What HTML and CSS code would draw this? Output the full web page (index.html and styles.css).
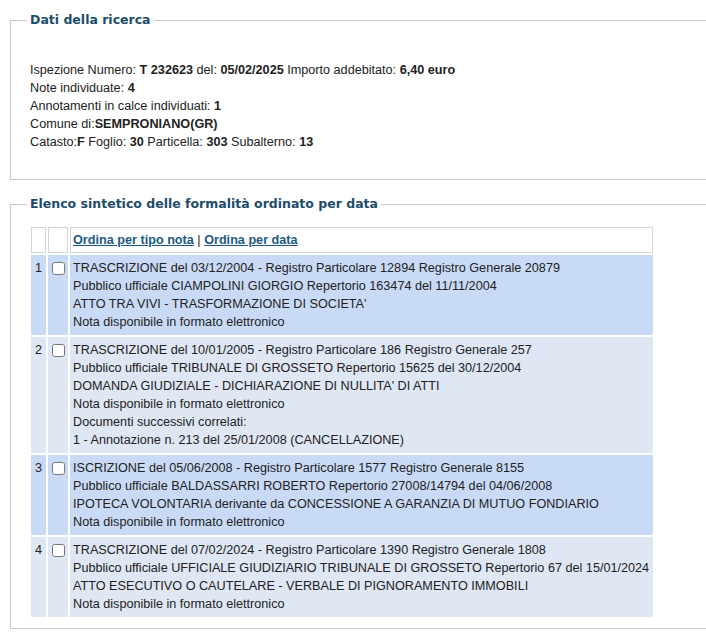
FILE: index.html
```html
<!DOCTYPE html>
<html lang="it">
<head>
    <meta charset="UTF-8">
    <meta name="viewport" content="width=device-width, initial-scale=1.0">
    <title>Ispezione ipotecaria</title>
    <link rel="stylesheet" href="styles.css">
</head>
<body>
    <div class="page">
        <!-- riepilogo della ricerca -->
        <fieldset class="box box-ricerca">
            <legend>Dati della ricerca</legend>
            <p>Ispezione Numero: <b>T 232623</b> del: <b>05/02/2025</b> Importo addebitato: <b>6,40 euro</b></p>
            <p>Note individuate: <b>4</b></p>
            <p>Annotamenti in calce individuati: <b>1</b></p>
            <p>Comune di:<b>SEMPRONIANO(GR)</b></p>
            <p>Catasto:<b>F</b> Foglio: <b>30</b> Particella: <b>303</b> Subalterno: <b>13</b></p>
        </fieldset>

        <!-- elenco formalita -->
        <fieldset class="box box-elenco">
            <legend>Elenco sintetico delle formalità ordinato per data</legend>
            <table class="elenco">
                <tr class="intestazione">
                    <td></td>
                    <td></td>
                    <td><a href="#">Ordina per tipo nota</a> | <a href="#">Ordina per data</a></td>
                </tr>
                <tr class="riga-a">
                    <td>1</td>
                    <td><input type="checkbox" name="nota1"></td>
                    <td>TRASCRIZIONE del 03/12/2004 - Registro Particolare 12894 Registro Generale 20879<br>
                        Pubblico ufficiale CIAMPOLINI GIORGIO Repertorio 163474 del 11/11/2004<br>
                        ATTO TRA VIVI - TRASFORMAZIONE DI SOCIETA'<br>
                        Nota disponibile in formato elettronico</td>
                </tr>
                <tr class="riga-b">
                    <td>2</td>
                    <td><input type="checkbox" name="nota2"></td>
                    <td>TRASCRIZIONE del 10/01/2005 - Registro Particolare 186 Registro Generale 257<br>
                        Pubblico ufficiale TRIBUNALE DI GROSSETO Repertorio 15625 del 30/12/2004<br>
                        DOMANDA GIUDIZIALE - DICHIARAZIONE DI NULLITA' DI ATTI<br>
                        Nota disponibile in formato elettronico<br>
                        Documenti successivi correlati:<br>
                        1 - Annotazione n. 213 del 25/01/2008 (CANCELLAZIONE)</td>
                </tr>
                <tr class="riga-a">
                    <td>3</td>
                    <td><input type="checkbox" name="nota3"></td>
                    <td>ISCRIZIONE del 05/06/2008 - Registro Particolare 1577 Registro Generale 8155<br>
                        Pubblico ufficiale BALDASSARRI ROBERTO Repertorio 27008/14794 del 04/06/2008<br>
                        IPOTECA VOLONTARIA derivante da CONCESSIONE A GARANZIA DI MUTUO FONDIARIO<br>
                        Nota disponibile in formato elettronico</td>
                </tr>
                <tr class="riga-b">
                    <td>4</td>
                    <td><input type="checkbox" name="nota4"></td>
                    <td>TRASCRIZIONE del 07/02/2024 - Registro Particolare 1390 Registro Generale 1808<br>
                        Pubblico ufficiale UFFICIALE GIUDIZIARIO TRIBUNALE DI GROSSETO Repertorio 67 del 15/01/2024<br>
                        ATTO ESECUTIVO O CAUTELARE - VERBALE DI PIGNORAMENTO IMMOBILI<br>
                        Nota disponibile in formato elettronico</td>
                </tr>
            </table>
        </fieldset>
    </div>
</body>
</html>
```

FILE: styles.css
```css
html, body {
    overflow: hidden;
}
body {
    font-family: "Liberation Sans", Arial, sans-serif;
    font-size: 12.65px;
    line-height: 18px;
    color: #222;
    margin: 0;
    background-color: #fff;
}
.page {
    width: 720px;
    padding: 11px 0 0 10px;
}
.box {
    margin: 0;
    border: 1px solid #c9c9c9;
    padding: 0 0 0 19px;
}
.box legend {
    font-family: "DejaVu Sans", Verdana, sans-serif;
    font-weight: bold;
    font-size: 12.5px;
    line-height: 18px;
    color: #1d4c6b;
    padding: 0 3px;
    margin-left: -3px;
}
.box p {
    margin: 0;
}
.box-ricerca {
    padding-top: 32px;
    padding-bottom: 28px;
}
.box-elenco {
    margin-top: 15px;
    padding-top: 12px;
    padding-bottom: 9px;
}
.elenco {
    border-spacing: 2px;
    margin-left: -1px;
}
.elenco td {
    vertical-align: top;
    padding: 3px;
    border: 1px solid transparent;
    white-space: nowrap;
}
.elenco td:nth-child(2) {
    padding: 3px 2px 3px 3px;
}
.elenco td:nth-child(3) {
    padding-left: 2px;
}
.elenco input[type="checkbox"] {
    margin: 3px 0 0 0;
    width: 13px;
    height: 13px;
}
.intestazione td {
    background-color: #fff;
    border-color: #d4d4d4;
}
.intestazione a {
    color: #1b5b86;
    font-weight: bold;
}
.riga-a td {
    background-color: #c9daf7;
}
.riga-b td {
    background-color: #dfe6f4;
}
```
